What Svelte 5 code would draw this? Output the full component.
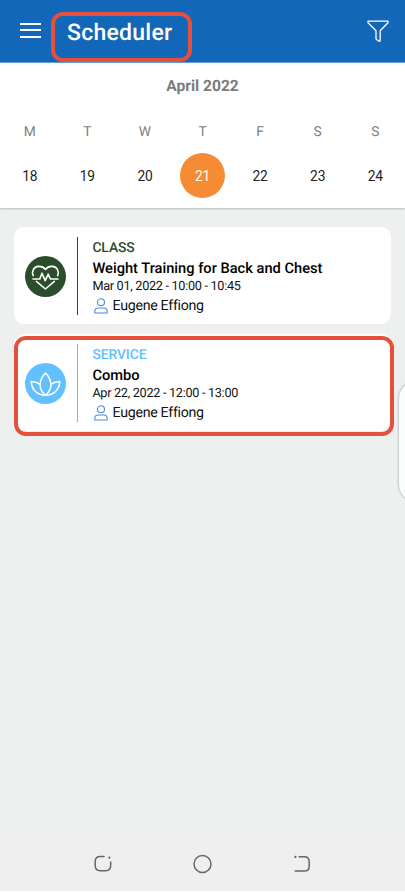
<script>
  const days = [
    { letter: 'M', date: 18 },
    { letter: 'T', date: 19 },
    { letter: 'W', date: 20 },
    { letter: 'T', date: 21 },
    { letter: 'F', date: 22 },
    { letter: 'S', date: 23 },
    { letter: 'S', date: 24 }
  ];
  let selected = $state(21);

  const bookings = [
    { kind: 'class', label: 'CLASS', title: 'Weight Training for Back and Chest', time: 'Mar 01, 2022 - 10:00 - 10:45', coach: 'Eugene Effiong' },
    { kind: 'service', label: 'SERVICE', title: 'Combo', time: 'Apr 22, 2022 - 12:00 - 13:00', coach: 'Eugene Effiong' }
  ];
</script>

<div class="screen">
  <header>
    <button class="menu" aria-label="Menu"><i></i><i></i><i></i></button>
    <h1>Scheduler</h1>
    <button class="filter" aria-label="Filter">
      <svg width="22" height="23" viewBox="0 0 22 23" fill="none" stroke="#fff" stroke-width="1.3" stroke-linejoin="round">
        <path d="M1 1.2H21V2.7L13.2 10.8V21L11.8 21.2L9 19V10.8L1 2.7Z" />
      </svg>
    </button>
    <span class="mark title-mark"></span>
  </header>

  <section class="calendar">
    <h2>April 2022</h2>
    <div class="week">
      {#each days as day}
        <div class="day">
          <span class="letter">{day.letter}</span>
          <button class="date" class:selected={day.date === selected} onclick={() => (selected = day.date)}>{day.date}</button>
        </div>
      {/each}
    </div>
  </section>

  <main>
    {#each bookings as item}
      <article class={item.kind}>
        <div class="badge">
          {#if item.kind === 'class'}
            <svg width="41" height="41" viewBox="0 0 41 41" fill="none" stroke="#fff" stroke-width="1.6" stroke-linecap="round" stroke-linejoin="round">
              <path d="M8.2 19.6C6.4 15.8 8.6 10.8 13.5 10.4C16.6 10.2 18.8 11.4 20.4 13.4C22 11.4 24.2 10.2 27.3 10.4C32.2 10.8 34.4 15.8 32.6 19.6" />
              <path d="M8 23H14.8L17 17.2L20.2 24.6L23.2 18.2L25.4 23H33" />
              <path d="M11.4 25.4L20.4 33L29.4 25.4" />
            </svg>
          {:else}
            <svg width="41" height="41" viewBox="0 0 41 41" fill="none" stroke="#fff" stroke-width="1.5" stroke-linecap="round" stroke-linejoin="round">
              <path d="M20.5 32.2C13.6 27 13 17.8 20.5 10C28 17.8 27.4 27 20.5 32.2Z" />
              <path d="M15 21.2C12.2 19.2 9.2 18.4 6.2 18.4C6.6 27 12.5 32.2 20.5 32.2C28.5 32.2 34.4 27 34.8 18.4C31.8 18.4 28.8 19.2 26 21.2" />
            </svg>
          {/if}
        </div>
        <div class="details">
          <span class="label">{item.label}</span>
          <strong>{item.title}</strong>
          <span class="time">{item.time}</span>
          <span class="coach">
            <svg width="14" height="16" viewBox="0 0 14 16" fill="none" stroke="#4a8ed3" stroke-width="1.1">
              <circle cx="7" cy="4.3" r="3.5" />
              <path d="M.8 15V13.4C.8 11.3 2.2 10 4.2 10H9.8C11.8 10 13.2 11.3 13.2 13.4V15Z" stroke-linejoin="round" />
            </svg>
            {item.coach}
          </span>
        </div>
        {#if item.kind === 'service'}<span class="mark card-mark"></span>{/if}
      </article>
    {/each}
  </main>

  <span class="edge-handle"></span>

  <nav>
    <svg width="18" height="18" viewBox="0 0 18 18" fill="none" stroke="#666" stroke-width="1.5" stroke-linecap="round">
      <path d="M10 1.4H6.2Q1.2 1.4 1.2 6.4V10.6Q1.2 15.8 6.2 15.8H11.6Q16.7 15.8 16.7 10.6V7" />
      <path d="M15.4 2.6V2.7" stroke-width="2.2" />
    </svg>
    <svg width="20" height="20" viewBox="0 0 20 20" fill="none" stroke="#666" stroke-width="1.5"><circle cx="9.5" cy="10" r="8.5" /></svg>
    <svg width="18" height="18" viewBox="0 0 18 18" fill="none" stroke="#666" stroke-width="1.5" stroke-linecap="round">
      <path d="M6.2 1.8H11.3Q16.2 1.8 16.2 6.7V11.2Q16.2 16.1 11.3 16.1H2.2" />
      <path d="M2.4 1.8V1.9" stroke-width="2.2" />
    </svg>
  </nav>
</div>

<style>
  :global(body) { margin: 0; background: #fff; }
  .screen {
    position: relative;
    width: 405px;
    height: 891px;
    overflow: hidden;
    display: flex;
    flex-direction: column;
    background: #eef0f0;
    font-family: Roboto, "Liberation Sans", sans-serif;
    text-rendering: geometricPrecision;
  }
  button { border: 0; padding: 0; background: none; font: inherit; color: inherit; }
  h1, h2 { margin: 0; }
  .mark { position: absolute; box-sizing: border-box; border: 4px solid #e5503c; pointer-events: none; }

  header {
    position: relative;
    box-sizing: border-box;
    flex: none;
    height: 63px;
    border-bottom: 1px solid #6ba0d2;
    background: #1267b8;
    color: #fff;
    display: flex;
    align-items: flex-start;
    padding: 0 16px 0 20px;
  }
  .menu { display: flex; flex-direction: column; gap: 4px; margin-top: 23px; width: 21px; }
  .menu i { height: 2px; margin-bottom: .4px; background: #fff; }
  h1 { margin: 19px 0 0 26px; font-size: 23px; line-height: 28px; font-weight: 500; letter-spacing: .25px; }
  .filter { margin: 20px 0 0 auto; width: 22px; height: 23px; }
  .filter svg { display: block; }
  .title-mark { left: 51px; top: 12px; width: 141px; height: 50px; border-radius: 12px; }

  .calendar {
    position: relative;
    box-sizing: border-box;
    flex: none;
    height: 145px;
    background: linear-gradient(#f8f8f8, #fff 4px);
    box-shadow: 0 1px 2px rgba(0, 0, 0, .22);
    padding-top: 13px;
  }
  h2 { text-align: center; font-size: 15.6px; line-height: 20px; font-weight: 700; color: #7b7b7b; }
  .week { display: flex; padding: 0 1px; margin-top: 27px; }
  .day { flex: 1; display: flex; flex-direction: column; align-items: center; }
  .letter { font-size: 13.8px; line-height: 18px; color: #808080; }
  .date { width: 45px; height: 45px; margin-top: 12px; border-radius: 50%; font-size: 13.8px; letter-spacing: -.2px; color: #222; }
  .date.selected { background: #f58b34; color: #fff; }

  main { flex: 1; display: flex; flex-direction: column; gap: 10px; padding: 19px 14px 0; }
  article {
    position: relative;
    box-sizing: border-box;
    height: 97px;
    border-radius: 10px;
    background: #fff;
    display: flex;
    padding: 10px 0 9px 11px;
    color: #111;
  }
  .class { --tone: #2b4d2c; }
  .service { --tone: #62c0ff; }
  .badge { width: 52px; border-right: 1px solid var(--tone); display: flex; align-items: center; }
  .badge svg { border-radius: 50%; background: var(--tone); }
  .details { display: flex; flex-direction: column; padding-left: 14.4px; margin-top: 2px; }
  .label { font-size: 13.9px; line-height: 19px; font-weight: 500; letter-spacing: -.1px; color: var(--tone); }
  strong { font-size: 14.65px; line-height: 20px; font-weight: 500; color: #000; }
  .time { font-size: 12.7px; line-height: 18px; letter-spacing: -.3px; }
  .coach { display: flex; align-items: center; font-size: 14.2px; line-height: 20px; letter-spacing: -.3px; gap: 4.2px; padding-left: 2px; }
  .card-mark { left: 0; top: 2px; width: 380px; height: 100px; border-radius: 12px; }

  .edge-handle {
    position: absolute;
    left: 399px;
    top: 381px;
    width: 36px;
    height: 121px;
    border-radius: 18px;
    background: #fafbfb;
    box-shadow: 0 0 2px 1px rgba(0, 0, 0, .18);
  }
  nav {
    box-sizing: border-box;
    flex: none;
    height: 54px;
    background: #efefef;
    display: flex;
    align-items: center;
    justify-content: space-between;
    padding: 0 94px;
  }
</style>
